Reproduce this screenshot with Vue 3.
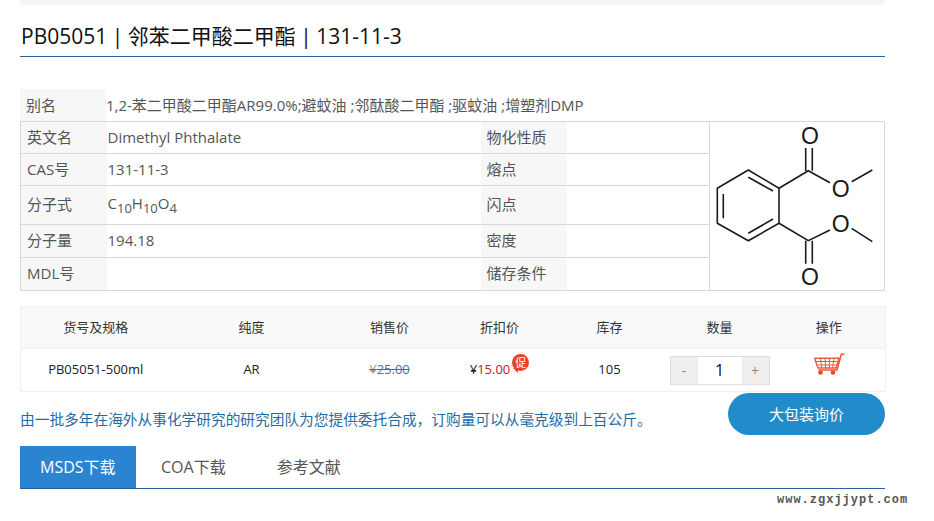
<template>
  <div class="page">
    <div class="top-strip"></div>
    <h1 class="title">PB05051 | 邻苯二甲酸二甲酯 | 131-11-3</h1>

    <div class="alias">
      <div class="alias-label">别名</div>
      <div class="alias-value">1,2-苯二甲酸二甲酯AR99.0%;避蚊油 ;邻酞酸二甲酯 ;驱蚊油 ;增塑剂DMP</div>
    </div>

    <table class="info">
      <colgroup>
        <col style="width: 86px" />
        <col style="width: 374px" />
        <col style="width: 86px" />
        <col style="width: 143px" />
        <col />
      </colgroup>
      <tbody>
        <tr v-for="(row, i) in infoRows" :key="row.label" :class="row.cls">
          <th>{{ row.label }}</th>
          <td>
            <template v-if="row.formula">C<sub>10</sub>H<sub>10</sub>O<sub>4</sub></template>
            <template v-else>{{ row.value }}</template>
          </td>
          <th class="second">{{ row.label2 }}</th>
          <td></td>
          <td v-if="i === 0" rowspan="5" class="structure">
            <svg width="175" height="168" viewBox="0 2 175 168" fill="none" stroke="#1a1a1a" stroke-width="1.6">
              <path d="M38.3 50 69 68.3v35L38.3 120.7 7.3 103.3v-35Z" stroke-linejoin="round" />
              <path d="M38.3 57.3 63 71M13.3 74v24.3M38.3 113.3 63 99" />
              <path d="M69 68.3 98.3 50.7 120 62.7M95.7 28v23M102.3 28v22.7M141.7 61.7 162.3 50" />
              <path d="M69 103.3 98.3 120.7 120 110M95.7 120.7v23M102.3 120.7v23M141.7 108.3 162.3 121.7" />
              <text x="100" y="24" class="atom">O</text>
              <text x="130.7" y="76.5" class="atom">O</text>
              <text x="130.7" y="112" class="atom">O</text>
              <text x="100" y="165" class="atom">O</text>
            </svg>
          </td>
        </tr>
      </tbody>
    </table>

    <table class="goods">
      <colgroup>
        <col v-for="w in goodsCols" :key="w" :style="{ width: w + 'px' }" />
      </colgroup>
      <thead>
        <tr>
          <th>货号及规格</th>
          <th>纯度</th>
          <th>销售价</th>
          <th>折扣价</th>
          <th>库存</th>
          <th>数量</th>
          <th>操作</th>
        </tr>
      </thead>
      <tbody>
        <tr>
          <td>PB05051-500ml</td>
          <td>AR</td>
          <td><span class="old-price"><i>¥</i>25.00</span></td>
          <td>
            <span class="price">¥<em>15.00</em><span class="promo">促</span></span>
          </td>
          <td>105</td>
          <td>
            <div class="stepper">
              <span class="step">-</span>
              <span class="qty">1</span>
              <span class="step">+</span>
            </div>
          </td>
          <td>
            <svg class="cart" width="32" height="23" viewBox="0 0 32 23" fill="none" stroke="#ee5b3a">
              <path d="M0.5 5.3h24.5L22 15H4L0.5 5.3" stroke-width="1.4" />
              <path d="M1.5 8.5h22M3 12h20M6.5 5.3l1.2 9.7M11 5.3l.6 9.7M15.5 5.3l-.2 9.7M20 5.3 18.5 15" stroke-width="1" />
              <path d="M30.5 1.3h-3.2L23 17H4.5" stroke-width="1.6" />
              <circle cx="6.5" cy="19.5" r="2.3" fill="#ee4a24" stroke="none" />
              <circle cx="19" cy="19.5" r="2.3" fill="#ee4a24" stroke="none" />
            </svg>
          </td>
        </tr>
      </tbody>
    </table>

    <div class="note-row">
      <p class="note">由一批多年在海外从事化学研究的研究团队为您提供委托合成，订购量可以从毫克级到上百公斤。</p>
      <button class="bulk-btn">大包装询价</button>
    </div>

    <div class="tabs">
      <div v-for="(tab, i) in tabs" :key="tab" class="tab" :class="{ active: i === 0 }">{{ tab }}</div>
    </div>

    <div class="watermark">www.zgxjjypt.com</div>
  </div>
</template>

<script setup>
const infoRows = [
  { label: '英文名', value: 'Dimethyl Phthalate', label2: '物化性质', cls: 'h32' },
  { label: 'CAS号', value: '131-11-3', label2: '熔点', cls: 'h32' },
  { label: '分子式', formula: true, label2: '闪点', cls: 'h39' },
  { label: '分子量', value: '194.18', label2: '密度', cls: 'h33' },
  { label: 'MDL号', value: '', label2: '储存条件', cls: 'h33' },
];

const goodsCols = [150, 162, 114, 106, 114, 106, 113];

const tabs = ['MSDS下载', 'COA下载', '参考文献'];
</script>

<style>
html,
body {
  background: #fff;
}
</style>

<style scoped>
.page {
  position: relative;
  width: 865px;
  height: 521px;
  margin-left: 20px;
  overflow: visible;
  font-family: "Open Sans", "Noto Sans CJK SC", sans-serif;
  color: #555;
}

.top-strip {
  height: 5px;
  background: #f5f5f5;
  border-radius: 0 0 5px 5px;
}

.title {
  margin: 0;
  height: 52px;
  padding: 15px 0 0 1px;
  box-sizing: border-box;
  border-bottom: 1px solid #2a6496;
  font-size: 21px;
  font-weight: 400;
  line-height: 32px;
  word-spacing: -1px;
  color: #111;
}

.alias {
  display: flex;
  height: 32px;
  margin-top: 32px;
  font-size: 15px;
  line-height: 32px;
}

.alias-label {
  width: 80px;
  padding-left: 6px;
  flex-shrink: 0;
  background: #f7f7f7;
}

.alias-value {
  white-space: nowrap;
}

.info {
  width: 865px;
  border-collapse: collapse;
  table-layout: fixed;
  font-size: 15px;
}

.info th,
.info td {
  padding: 0 0 2px 1px;
  border: 1px solid #d8d8d8;
  border-left: none;
  border-right: none;
  text-align: left;
  font-weight: 400;
  color: #555;
}

.info tr > :first-child {
  border-left: 1px solid #d8d8d8;
}

.info th {
  padding-left: 6px;
  background: #f7f7f7;
}

.info .h33 th,
.info .h39 th,
.info .h39 td {
  padding-bottom: 4px;
}

.info .structure {
  padding: 0;
  border-left: 1px solid #d8d8d8;
  border-right: 1px solid #d8d8d8;
  vertical-align: middle;
}

.info svg {
  display: block;
}

.info sub {
  font-size: 13px;
  line-height: 0;
}

.h32 {
  height: 32px;
}

.h33 {
  height: 33px;
}

.h39 {
  height: 39px;
}

.atom {
  font-family: "Liberation Sans", sans-serif;
  font-size: 23px;
  fill: #1a1a1a;
  stroke: none;
  text-anchor: middle;
}

.goods {
  width: 865px;
  margin-top: 15px;
  border-collapse: collapse;
  table-layout: fixed;
  border: 1px solid #f0f0f0;
  font-size: 13px;
  text-align: center;
  color: #222;
}

.goods th {
  height: 42px;
  padding: 0 0 2px;
  box-sizing: border-box;
  background: #f9f9f9;
  font-weight: 400;
  color: #333;
  border-bottom: 1px solid #f0f0f0;
}

.goods td {
  height: 43px;
  padding: 0 0 2px;
  box-sizing: border-box;
}

.old-price {
  color: #3d78b5;
  text-decoration: line-through;
  text-decoration-color: #666;
}

.old-price i {
  font-style: normal;
  color: #999;
}

.price {
  color: #222;
}

.price em {
  font-style: normal;
  color: #c8102e;
}

.promo {
  display: inline-block;
  position: relative;
  top: -7px;
  width: 17px;
  height: 17px;
  margin-left: 2px;
  border-radius: 50%;
  background: #e8412a;
  color: #fff;
  font-size: 11px;
  line-height: 17px;
  text-align: center;
}

.promo::after {
  content: "";
  position: absolute;
  left: 1px;
  bottom: -2px;
  border-top: 5px solid #e8412a;
  border-left: 5px solid transparent;
}

.stepper {
  display: flex;
  width: 100px;
  height: 29px;
  margin: 2px auto 0;
  box-sizing: border-box;
  border: 1px solid #ddd;
}

.step {
  width: 27px;
  background: #eee;
  color: #888;
  font-size: 14px;
  line-height: 27px;
}

.qty {
  flex: 1;
  color: #111;
  font-size: 16px;
  line-height: 27px;
}

.cart {
  display: block;
  margin: -10px auto 0;
  transform: translateX(1px);
}

.note-row {
  display: flex;
  justify-content: space-between;
  height: 54px;
}

.note {
  margin: 19px 0 0;
  font-size: 14.7px;
  line-height: 16px;
  color: #1f6ba5;
}

.bulk-btn {
  width: 157px;
  height: 42px;
  margin-top: 1px;
  padding: 0 0 2px;
  border: none;
  border-radius: 21px;
  background: #228ccb;
  color: #fff;
  font-family: inherit;
  font-size: 15px;
}

.tabs {
  display: flex;
  height: 43px;
  box-sizing: border-box;
  border-bottom: 1px solid #2a5f9f;
}

.tab {
  padding: 0 26px 0 25px;
  font-size: 16px;
  line-height: 42px;
  color: #555;
}

.tab.active {
  width: 116px;
  box-sizing: border-box;
  padding: 0 20px;
  background: #2a84d2;
  color: #fff;
}

.watermark {
  position: absolute;
  left: 757px;
  top: 493px;
  font-family: "Liberation Mono", monospace;
  font-size: 12px;
  font-weight: 700;
  line-height: 14px;
  letter-spacing: 1px;
  color: #555;
  white-space: nowrap;
}
</style>
